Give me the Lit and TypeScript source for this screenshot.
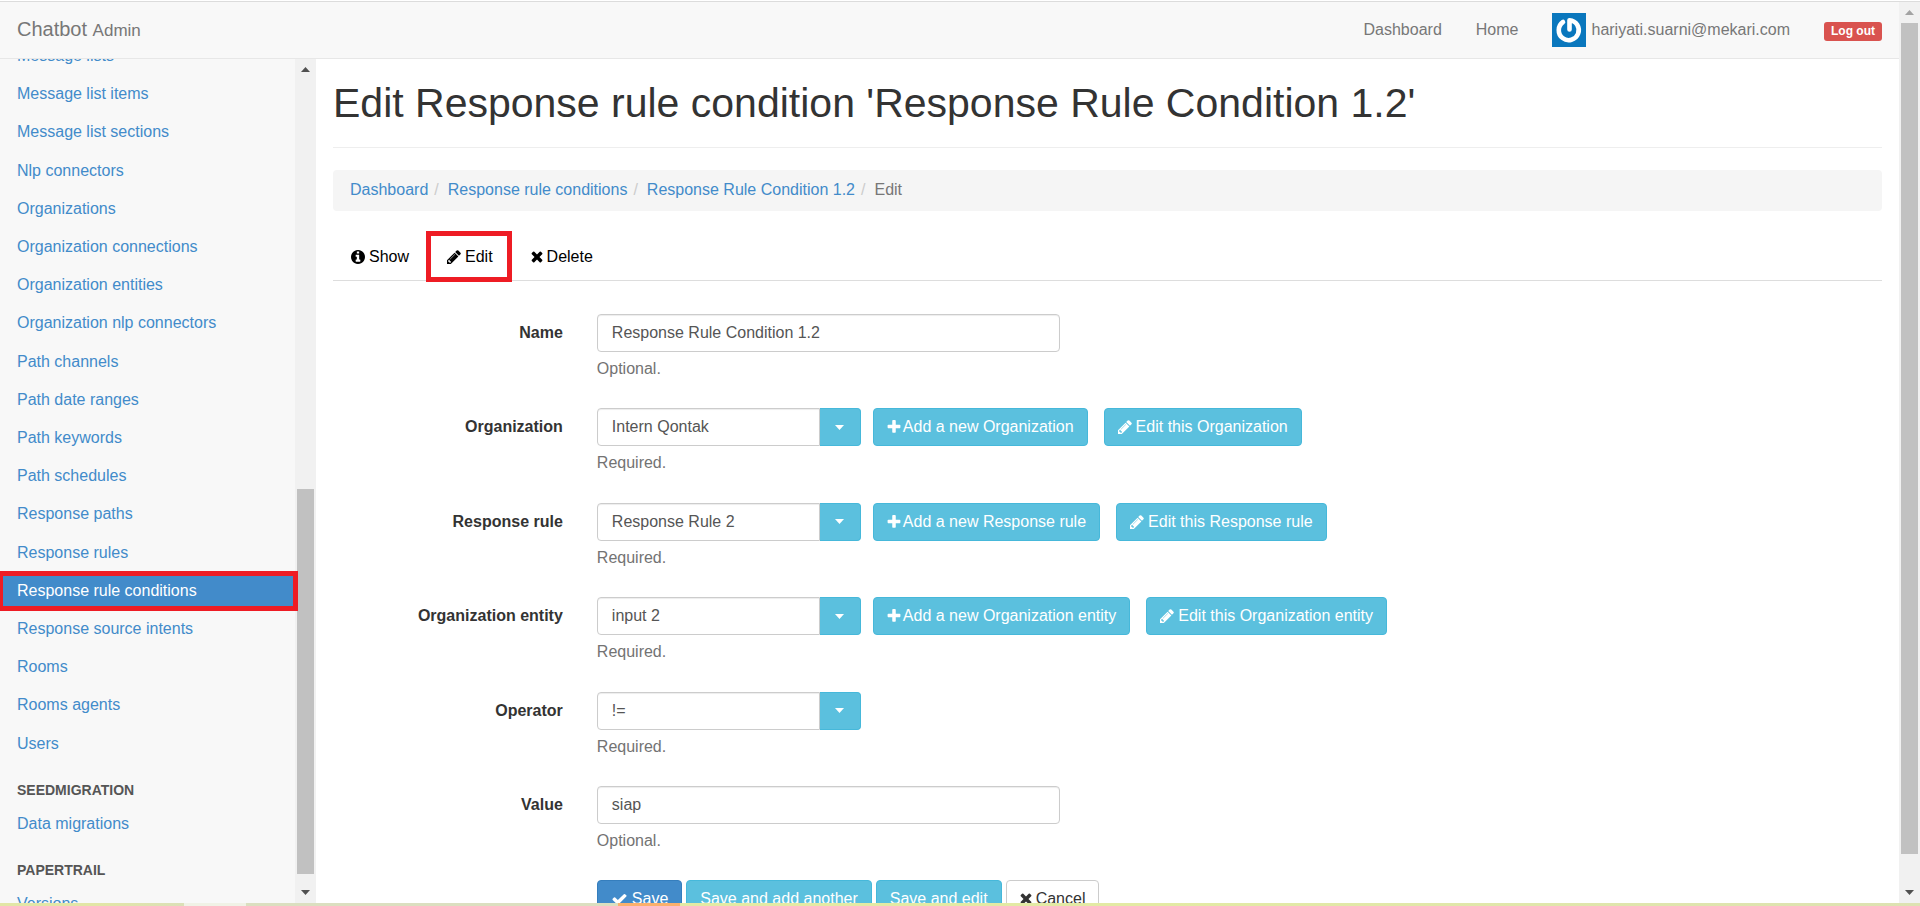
import { LitElement, html, css, svg, nothing } from "lit";
import { customElement, property } from "lit/decorators.js";
import { classMap } from "lit/directives/class-map.js";

const ICONS: Record<string, { box: string; path: string }> = {
  info: {
    box: "128 128 1536 1536",
    path: "M1152 1376v-160q0-14-9-23t-23-9h-96v-512q0-14-9-23t-23-9h-320q-14 0-23 9t-9 23v160q0 14 9 23t23 9h96v320h-96q-14 0-23 9t-9 23v160q0 14 9 23t23 9h448q14 0 23-9t9-23zm-128-896v-160q0-14-9-23t-23-9h-192q-14 0-23 9t-9 23v160q0 14 9 23t23 9h192q14 0 23-9t9-23zm640 416q0 209-103 385.5t-279.5 279.5-385.5 103-385.5-103-279.5-279.5-103-385.5 103-385.5 279.5-279.5 385.5-103 385.5 103 279.5 279.5 103 385.5z",
  },
  pencil: {
    box: "128 128 1536 1536",
    path: "M491 1536l91-91-235-235-91 91v107h128v128h107zm523-928q0-22-22-22-10 0-17 7l-542 542q-7 7-7 17 0 22 22 22 10 0 17-7l542-542q7-7 7-17zm-54-192l416 416-832 832h-416v-416zm683 96q0 53-37 90l-166 166-416-416 166-165q36-38 90-38 53 0 91 38l235 234q37 39 37 91z",
  },
  times: {
    box: "250 192 1290 1536",
    path: "M1490 1322q0 40-28 68l-136 136q-28 28-68 28t-68-28l-294-294-294 294q-28 28-68 28t-68-28l-136-136q-28-28-28-68t28-68l294-294-294-294q-28-28-28-68t28-68l136-136q28-28 68-28t68 28l294 294 294-294q28-28 68-28t68 28l136 136q28 28 28 68t-28 68l-294 294 294 294q28 28 28 68z",
  },
  plus: {
    box: "192 128 1408 1536",
    path: "M1600 736v192q0 40-28 68t-68 28h-416v416q0 40-28 68t-68 28h-192q-40 0-68-28t-28-68v-416h-416q-40 0-68-28t-28-68v-192q0-40 28-68t68-28h416v-416q0-40 28-68t68-28h192q40 0 68 28t28 68v416h416q40 0 68 28t28 68z",
  },
  check: {
    box: "110 128 1572 1536",
    path: "M1671 566q0 40-28 68l-724 724-136 136q-28 28-68 28t-68-28l-136-136-362-362q-28-28-28-68t28-68l136-136q28-28 68-28t68 28l294 295 656-657q28-28 68-28t68 28l136 136q28 28 28 68z",
  },
};

const icon = (name: string) => html`<svg
  class="icon ${name}"
  viewBox=${ICONS[name].box}
  aria-hidden="true"
>
  ${svg`<path fill="currentColor" d=${ICONS[name].path}></path>`}
</svg>`;

const MODELS = [
  "Message lists",
  "Message list items",
  "Message list sections",
  "Nlp connectors",
  "Organizations",
  "Organization connections",
  "Organization entities",
  "Organization nlp connectors",
  "Path channels",
  "Path date ranges",
  "Path keywords",
  "Path schedules",
  "Response paths",
  "Response rules",
  "Response rule conditions",
  "Response source intents",
  "Rooms",
  "Rooms agents",
  "Users",
];

interface Field {
  id: string;
  label: string;
  value: string;
  help: string;
  combo?: boolean;
  related?: string;
}

const FIELDS: Field[] = [
  { id: "name", label: "Name", value: "Response Rule Condition 1.2", help: "Optional." },
  { id: "organization", label: "Organization", value: "Intern Qontak", help: "Required.", combo: true, related: "Organization" },
  { id: "rule", label: "Response rule", value: "Response Rule 2", help: "Required.", combo: true, related: "Response rule" },
  { id: "entity", label: "Organization entity", value: "input 2", help: "Required.", combo: true, related: "Organization entity" },
  { id: "operator", label: "Operator", value: "!=", help: "Required.", combo: true },
  { id: "value", label: "Value", value: "siap", help: "Optional." },
];

const buttonStyles = css`
  .btn {
    box-sizing: border-box;
    display: inline-flex;
    align-items: center;
    height: 38px;
    padding: 0 13px;
    border: 1px solid #46b8da;
    border-radius: 4px;
    background: #5bc0de;
    color: #fff;
    font: inherit;
    white-space: nowrap;
    text-decoration: none;
    cursor: pointer;
  }
  .btn.primary {
    background: #428bca;
    border-color: #357ebd;
  }
  .btn.plain {
    background: #fff;
    border-color: #ccc;
    color: #333;
  }
  .icon {
    display: block;
    flex: none;
    width: 14px;
    height: 14px;
    margin-right: 4px;
  }
  .icon.times {
    width: 12px;
  }
  .icon.plus {
    margin-right: 2px;
  }
  .icon.check {
    width: 17px;
  }
`;

@customElement("scroll-track")
export class ScrollTrack extends LitElement {
  @property({ type: Boolean, reflect: true }) atTop = false;

  static styles = css`
    :host {
      display: flex;
      flex-direction: column;
      align-items: center;
      background: #f1f1f1;
    }
    .arrow {
      flex: none;
      display: block;
      width: 9px;
      height: 5px;
      margin: 8px 0;
      fill: #505050;
    }
    .arrow.idle {
      fill: #a3a3a3;
    }
    .rail {
      flex: 1;
      width: 17px;
      display: flex;
      flex-direction: column;
    }
    .before {
      flex: var(--before, 0);
    }
    .thumb {
      flex: var(--thumb, 1);
      background: #c1c1c1;
    }
    .after {
      flex: var(--after, 0);
    }
  `;

  render() {
    return html`
      <svg class=${classMap({ arrow: true, idle: this.atTop })} viewBox="0 0 9 5">
        <path d="M0 5 4.500 0 9 5z"></path>
      </svg>
      <div class="rail">
        <div class="before"></div>
        <div class="thumb"></div>
        <div class="after"></div>
      </div>
      <svg class="arrow" viewBox="0 0 9 5"><path d="M0 0 4.500 5 9 0z"></path></svg>
    `;
  }
}

@customElement("admin-header")
export class AdminHeader extends LitElement {
  static styles = css`
    :host {
      display: flex;
      align-items: center;
      height: 56px;
      padding: 0 17px;
      background: #f8f8f8;
      border-bottom: 1px solid #e7e7e7;
      color: #777;
      line-height: 22px;
    }
    a {
      color: inherit;
      text-decoration: none;
    }
    .brand {
      font-size: 20px;
      margin-right: auto;
    }
    .brand small {
      font-size: 17px;
    }
    nav {
      display: flex;
      align-items: center;
      gap: 34px;
    }
    .user {
      display: flex;
      align-items: center;
      gap: 5px;
    }
    .avatar {
      display: block;
      width: 34px;
      height: 34px;
    }
    .logout {
      margin-top: 3px;
      padding: 0 7px;
      border-radius: 3px;
      background: #d9534f;
      color: #fff;
      font-size: 12px;
      font-weight: bold;
      line-height: 19px;
    }
  `;

  render() {
    return html`
      <a class="brand" href="#">Chatbot <small>Admin</small></a>
      <nav>
        <a href="#">Dashboard</a>
        <a href="#">Home</a>
        <a class="user" href="#">
          <svg class="avatar" viewBox="0 0 34 34" aria-hidden="true">
            <rect width="34" height="34" fill="#0a77bd"></rect>
            <path
              d="M11 9A10 10 0 1 0 17.500 7.200V16.500"
              fill="none"
              stroke="#fff"
              stroke-width="4.600"
              stroke-linecap="round"
              stroke-linejoin="round"
            ></path>
          </svg>
          <span>hariyati.suarni@mekari.com</span>
        </a>
        <a class="logout" href="#">Log out</a>
      </nav>
    `;
  }
}

@customElement("admin-sidebar")
export class AdminSidebar extends LitElement {
  static styles = css`
    :host {
      display: flex;
      flex: none;
      width: 316px;
      overflow: hidden;
      background: #f8f8f8;
      line-height: 22px;
    }
    nav {
      flex: 1;
      min-width: 0;
      display: flex;
      flex-direction: column;
      margin: -23px 0 -19px;
    }
    ul {
      list-style: none;
      margin: 0;
      padding: 0;
    }
    .models {
      flex: 1;
      display: flex;
      flex-direction: column;
    }
    .models li {
      flex: 1;
      display: flex;
      position: relative;
    }
    a {
      flex: 1;
      padding: 9px 17px 7px;
      color: #428bca;
      text-decoration: none;
    }
    .current a {
      background: #428bca;
      color: #fff;
    }
    .current::after {
      content: "";
      position: absolute;
      inset: 0 -3px -2px -2px;
      border: 5px solid #ee1c24;
      z-index: 1;
    }
    .single li {
      display: flex;
    }
    h2 {
      margin: 0;
      padding: 18px 17px 4px;
      color: #555;
      font-size: 14px;
      font-weight: bold;
      line-height: 20px;
    }
    scroll-track {
      width: 21px;
      --before: 409;
      --thumb: 385;
      --after: 8;
    }
  `;

  render() {
    return html`
      <nav>
        <ul class="models">
          ${MODELS.map(
            (name) => html`<li class=${name === "Response rule conditions" ? "current" : ""}>
              <a href="#">${name}</a>
            </li>`
          )}
        </ul>
        <h2>SEEDMIGRATION</h2>
        <ul class="single">
          <li><a href="#">Data migrations</a></li>
        </ul>
        <h2>PAPERTRAIL</h2>
        <ul class="single">
          <li><a href="#">Versions</a></li>
        </ul>
      </nav>
      <scroll-track></scroll-track>
    `;
  }
}

@customElement("condition-form")
export class ConditionForm extends LitElement {
  static styles = [
    buttonStyles,
    css`
      :host {
        display: block;
        line-height: 1.4;
      }
      .row {
        display: grid;
        grid-template-columns: minmax(0, 1fr) minmax(0, 5fr);
        margin: 0 -17px 17px;
      }
      label,
      .field {
        padding: 0 17px;
      }
      label {
        padding-top: 8px;
        text-align: right;
        font-weight: bold;
      }
      .field {
        grid-column: 2;
      }
      .controls {
        display: flex;
        align-items: center;
      }
      input {
        box-sizing: border-box;
        width: 463px;
        height: 38px;
        padding: 0 14px;
        border: 1px solid #ccc;
        border-radius: 4px;
        box-shadow: inset 0 1px 1px rgba(0, 0, 0, 0.075);
        background: #fff;
        color: #555;
        font: inherit;
      }
      .combo {
        display: flex;
        width: 264px;
        margin-right: 12px;
      }
      .combo input {
        flex: 1;
        min-width: 0;
        border-radius: 4px 0 0 4px;
      }
      .combo button {
        width: 41px;
        height: 38px;
        padding: 0;
        display: flex;
        align-items: center;
        justify-content: center;
        border: 1px solid #46b8da;
        border-left: 0;
        border-radius: 0 4px 4px 0;
        background: #5bc0de;
      }
      .caret {
        width: 9px;
        height: 5px;
        fill: #fff;
      }
      .controls .btn + .btn {
        margin-left: 16px;
      }
      p {
        margin: 6px 0 11px;
        color: #737373;
      }
      .actions {
        display: flex;
        gap: 4px;
      }
    `,
  ];

  private control(f: Field) {
    if (!f.combo) return html`<input id=${f.id} type="text" .value=${f.value} />`;
    return html`
      <div class="combo">
        <input id=${f.id} type="text" .value=${f.value} />
        <button type="button" aria-label="Show all items">
          <svg class="caret" viewBox="0 0 9 5"><path d="M0 0h9L4.500 5z"></path></svg>
        </button>
      </div>
      ${f.related
        ? html`<a class="btn" href="#">${icon("plus")}Add a new ${f.related}</a>
            <a class="btn" href="#">${icon("pencil")}Edit this ${f.related}</a>`
        : nothing}
    `;
  }

  render() {
    return html`<form @submit=${(e: Event) => e.preventDefault()}>
      ${FIELDS.map(
        (f) => html`<div class="row">
          <label for=${f.id}>${f.label}</label>
          <div class="field">
            <div class="controls">${this.control(f)}</div>
            <p>${f.help}</p>
          </div>
        </div>`
      )}
      <div class="row">
        <div class="field actions">
          <button class="btn primary" type="submit">${icon("check")}Save</button>
          <button class="btn" type="submit">Save and add another</button>
          <button class="btn" type="submit">Save and edit</button>
          <button class="btn plain" type="button">${icon("times")}Cancel</button>
        </div>
      </div>
    </form>`;
  }
}

@customElement("app-root")
export class AppRoot extends LitElement {
  static styles = [
    buttonStyles,
    css`
      :host {
        display: flex;
        flex-direction: column;
        box-sizing: border-box;
        height: 100vh;
        padding-top: 1px;
        overflow: hidden;
        background: #fff;
        color: #333;
        font: 16px/22px "Liberation Sans", Arial, sans-serif;
      }
      .window {
        flex: 1;
        min-height: 0;
        display: flex;
        border-top: 1px solid #dcdcdc;
      }
      .page {
        flex: 1;
        min-width: 0;
        display: flex;
        flex-direction: column;
      }
      .body {
        flex: 1;
        min-height: 0;
        display: flex;
      }
      main {
        flex: 1;
        min-width: 0;
        overflow: hidden;
        padding: 0 17px;
      }
      h1 {
        margin: 0 0 22px;
        padding: 21px 0;
        border-bottom: 1px solid #eee;
        font-size: 41px;
        font-weight: normal;
        line-height: 46px;
      }
      .crumbs {
        display: flex;
        list-style: none;
        margin: 0 0 22px;
        padding: 9px 17px 10px;
        border-radius: 4px;
        background: #f5f5f5;
        color: #777;
      }
      .crumbs li + li::before {
        content: "/";
        padding: 0 9px 0 6px;
        color: #ccc;
      }
      .crumbs a {
        color: #428bca;
        text-decoration: none;
      }
      .tabs {
        display: flex;
        gap: 2px;
        list-style: none;
        margin: 0 0 33px;
        padding: 0;
        border-bottom: 1px solid #ddd;
      }
      .tabs li {
        position: relative;
      }
      .tabs a {
        display: flex;
        align-items: center;
        padding: 13px 18px 12px;
        color: #000;
        text-decoration: none;
      }
      .marked::after {
        content: "";
        position: absolute;
        inset: -2px -1px -2px -3px;
        border: 5px solid #ee1c24;
      }
      .page-scroll {
        flex: none;
        width: 21px;
        --before: 0;
        --thumb: 831;
        --after: 28;
      }
      .strip {
        flex: none;
        height: 3px;
        background: linear-gradient(
          90deg,
          #e2e6a6 0 5%,
          #dbe0b8 9.6%,
          #f0f2e6 9.6% 12.8%,
          #dbdfc0 12.8% 32.2%,
          #fbb06c 32.2% 35.4%,
          #e3eaa4 35.4% 60%,
          #dde2b2
        );
      }
    `,
  ];

  render() {
    return html`
      <div class="window">
        <div class="page">
          <admin-header></admin-header>
          <div class="body">
            <admin-sidebar></admin-sidebar>
            <main>
              <h1>Edit Response rule condition 'Response Rule Condition 1.2'</h1>
              <ol class="crumbs">
                <li><a href="#">Dashboard</a></li>
                <li><a href="#">Response rule conditions</a></li>
                <li><a href="#">Response Rule Condition 1.2</a></li>
                <li>Edit</li>
              </ol>
              <ul class="tabs">
                <li><a href="#">${icon("info")}Show</a></li>
                <li class="marked"><a href="#">${icon("pencil")}Edit</a></li>
                <li><a href="#">${icon("times")}Delete</a></li>
              </ul>
              <condition-form></condition-form>
            </main>
          </div>
        </div>
        <scroll-track class="page-scroll" atTop></scroll-track>
      </div>
      <div class="strip"></div>
    `;
  }
}
